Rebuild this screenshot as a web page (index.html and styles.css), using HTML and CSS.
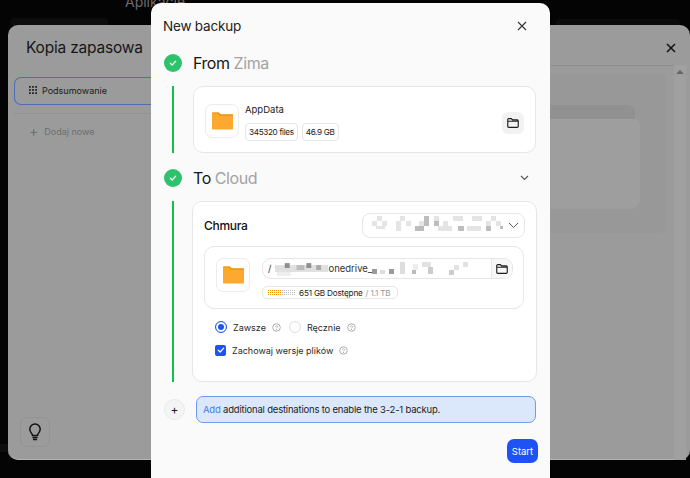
FILE: index.html
```html
<!DOCTYPE html>
<html lang="en">
<head>
    <meta charset="UTF-8">
    <meta name="viewport" content="width=device-width, initial-scale=1.0">
    <title>New backup</title>
    <link rel="stylesheet" href="styles.css">
</head>
<body>

    <svg class="sprites" width="0" height="0">
        <symbol id="folder-line" viewBox="0 0 16 16">
            <path d="M2 4.2c0-.7.5-1.2 1.2-1.2h2.9l1.4 1.500h5.300c.7 0 1.200.5 1.200 1.200v6.100c0 .7-.5 1.200-1.200 1.200H3.200c-.7 0-1.200-.5-1.200-1.200z M2 6h12" fill="none" stroke="currentColor" stroke-width="1.300"/>
        </symbol>
        <symbol id="folder-fill" viewBox="0 0 22 18">
            <path d="M0 1.200C0 .5.500 0 1.200 0h5.600l2.200 2h11.800c.7 0 1.200.5 1.200 1.200v13.600c0 .7-.5 1.200-1.200 1.200H1.200C.5 18 0 17.500 0 16.800z" fill="#fda92f"/>
            <path d="M7 0l2.400 2.200H22v1.300H8.500L6.200 1.200H0V1.200C0 .5.500 0 1.200 0z" fill="#ec8f1c"/>
        </symbol>
        <symbol id="check" viewBox="0 0 10 10">
            <path d="M2.300 5.200l1.900 1.800 3.500-3.800" fill="none" stroke="#fff" stroke-width="1.200" stroke-linecap="round" stroke-linejoin="round"/>
        </symbol>
        <symbol id="help" viewBox="0 0 10 10">
            <circle cx="5" cy="5" r="4.200" fill="none" stroke="currentColor" stroke-width="1"/>
            <path d="M3.800 4.100c0-.6.5-1.100 1.200-1.100s1.200.5 1.200 1.100c0 1-1.200.8-1.200 1.800" fill="none" stroke="currentColor" stroke-width=".9"/>
            <circle cx="5" cy="7.100" r=".6" fill="currentColor"/>
        </symbol>
        <defs>
            <pattern id="dots-used" width="2" height="2" patternUnits="userSpaceOnUse"><rect width="1" height="1" fill="#ee9412"/></pattern>
            <pattern id="dots-free" width="2" height="2" patternUnits="userSpaceOnUse"><rect width="1" height="1" fill="#bdbdbd"/></pattern>
        </defs>
    </svg>

    <div class="apps-title">Aplikacje</div>
    <div class="tile tile-a"></div>
    <div class="tile tile-b"></div>
    <div class="tile tile-c"></div>

    <div class="back-dialog">
        <div class="back-side">
            <div class="back-title">Kopia zapasowa</div>
            <div class="back-item">
                <svg class="dots" width="8" height="8" viewBox="0 0 9 9" fill="#222">
                    <rect width="2" height="2"/><rect x="3.500" width="2" height="2"/><rect x="7" width="2" height="2"/>
                    <rect y="3.500" width="2" height="2"/><rect x="3.500" y="3.500" width="2" height="2"/><rect x="7" y="3.500" width="2" height="2"/>
                    <rect y="7" width="2" height="2"/><rect x="3.500" y="7" width="2" height="2"/><rect x="7" y="7" width="2" height="2"/>
                </svg>
                Podsumowanie
            </div>
            <div class="back-add"><span class="back-plus">+</span>Dodaj nowe</div>
            <div class="bulb">
                <svg width="16" height="20" viewBox="0 0 16 20" fill="none" stroke="#111" stroke-width="1.500">
                    <path d="M5.500 13.500c0-2-2.700-3-2.700-6.300a5.200 5.200 0 0 1 10.400 0c0 3.300-2.700 4.300-2.700 6.300z"/>
                    <path d="M5.500 15.500h5M6 17.500h4"/>
                </svg>
            </div>
        </div>
        <div class="back-close">
            <svg width="10" height="10" viewBox="0 0 10 10" stroke="#111" stroke-width="1.500"><path d="M1 1l8 8M9 1l-8 8"/></svg>
        </div>
        <div class="back-rule"></div>
        <div class="back-pane">
            <div class="back-folder-tab"></div>
            <div class="back-folder"></div>
        </div>
        <div class="back-scroll"></div>
    </div>

    <div class="modal">
        <div class="modal-head">
            <span>New backup</span>
            <svg width="10" height="10" viewBox="0 0 10 10" stroke="#333" stroke-width="1.100"><path d="M1 1l8 8M9 1l-8 8"/></svg>
        </div>

        <div class="step-head">
            <span class="step-ok"><svg width="10" height="10"><use href="#check"/></svg></span>
            <span class="step-name">From <em>Zima</em></span>
        </div>
        <div class="step-body step-from">
            <div class="card source">
                <div class="icon-box"><svg width="21" height="18"><use href="#folder-fill"/></svg></div>
                <div class="source-info">
                    <div class="source-name">AppData</div>
                    <div class="tags">
                        <span class="tag">345320 files</span>
                        <span class="tag">46.9 GB</span>
                    </div>
                </div>
                <div class="folder-btn"><svg width="14" height="14"><use href="#folder-line"/></svg></div>
            </div>
        </div>

        <div class="step-head step-to">
            <span class="step-ok"><svg width="10" height="10"><use href="#check"/></svg></span>
            <span class="step-name">To <em>Cloud</em></span>
            <svg class="step-arrow" width="9" height="6" viewBox="0 0 9 6" fill="none" stroke="#555" stroke-width="1.100"><path d="M1 1l3.500 3.500L8 1"/></svg>
        </div>
        <div class="step-body step-dest">
            <div class="card dest">
                <div class="dest-top">
                    <span class="dest-title">Chmura</span>
                    <div class="select">
                        <svg class="mosaic" width="136" height="20" viewBox="0 0 136 20">
                            <g fill="#e4e4e4">
                                <rect x="9" y="1" width="5" height="5"/><rect x="4" y="6" width="5" height="5"/><rect x="14" y="6" width="5" height="5"/>
                                <rect x="32" y="1" width="5" height="5"/><rect x="28" y="6" width="5" height="5"/><rect x="38" y="6" width="5" height="5"/>
                                <rect x="51" y="6" width="5" height="5"/><rect x="66" y="1" width="5" height="5"/><rect x="75" y="6" width="5" height="5"/>
                                <rect x="85" y="1" width="10" height="5"/><rect x="104" y="1" width="10" height="5"/><rect x="123" y="1" width="5" height="5"/>
                                <rect x="118" y="6" width="5" height="5"/><rect x="128" y="6" width="5" height="5"/><rect x="99" y="11" width="14" height="5"/>
                                <rect x="28" y="11" width="5" height="5"/><rect x="70" y="11" width="14" height="5"/><rect x="8" y="11" width="9" height="3"/>
                            </g>
                            <g fill="#bdbdbd">
                                <rect x="56" y="1" width="5" height="10"/><rect x="47" y="11" width="9" height="5"/><rect x="66" y="6" width="5" height="5"/>
                                <rect x="118" y="11" width="5" height="5"/><rect x="90" y="11" width="6" height="5"/><rect x="132" y="11" width="3" height="3"/>
                            </g>
                        </svg>
                        <svg width="11" height="7" viewBox="0 0 11 7" fill="none" stroke="#555" stroke-width="1"><path d="M1 1l4.500 4.500L10 1"/></svg>
                    </div>
                </div>
                <div class="card path-card">
                    <div class="icon-box"><svg width="21" height="18"><use href="#folder-fill"/></svg></div>
                    <div class="path-main">
                        <div class="path-input">
                            <div class="path-text">
                                <span>/</span>
                                <svg class="mosaic" width="57" height="14" viewBox="0 0 58 14">
                                    <rect x="4" y="3" width="54" height="7" fill="#e0e0e0"/>
                                    <rect x="14" y="1" width="5" height="5" fill="#8f8f8f"/><rect x="26" y="3" width="8" height="5" fill="#bbb"/>
                                    <rect x="36" y="1" width="5" height="5" fill="#8f8f8f"/><rect x="46" y="3" width="5" height="5" fill="#aaa"/>
                                    <rect x="6" y="10" width="14" height="4" fill="#eee"/>
                                </svg>
                                <span>onedrive_</span>
                                <svg class="mosaic" width="98" height="14" viewBox="0 0 98 14">
                                    <rect x="0" y="7" width="5" height="5" fill="#9a9a9a"/><rect x="8" y="8" width="5" height="4" fill="#ddd"/><rect x="17" y="7" width="5" height="5" fill="#9a9a9a"/>
                                    <rect x="28" y="0" width="5" height="12" fill="#ddd"/><rect x="41" y="2" width="5" height="6" fill="#eee"/><rect x="40" y="8" width="4" height="4" fill="#bbb"/>
                                    <rect x="50" y="0" width="9" height="5" fill="#e2e2e2"/><rect x="56" y="5" width="5" height="7" fill="#ccc"/>
                                    <rect x="77" y="8" width="5" height="5" fill="#ccc"/><rect x="82" y="3" width="5" height="5" fill="#e2e2e2"/><rect x="91" y="0" width="5" height="5" fill="#e2e2e2"/>
                                </svg>
                            </div>
                            <div class="path-btn"><svg width="14" height="14"><use href="#folder-line"/></svg></div>
                        </div>
                        <div class="tag space-tag">
                            <svg class="space-bar" width="28" height="5">
                                <rect width="14" height="5" fill="url(#dots-used)"/>
                                <rect x="14" width="14" height="5" fill="url(#dots-free)"/>
                            </svg>
                            <span>651 GB Dostępne</span>
                            <span class="space-total">/ 1.1 TB</span>
                        </div>
                    </div>
                </div>
                <div class="options">
                    <span class="radio radio-on"></span>
                    <span class="opt-label">Zawsze</span>
                    <svg class="help" width="9" height="9"><use href="#help"/></svg>
                    <span class="radio radio-off"></span>
                    <span class="opt-label">Ręcznie</span>
                    <svg class="help" width="9" height="9"><use href="#help"/></svg>
                </div>
                <div class="options options-check">
                    <span class="checkbox"><svg width="10" height="10"><use href="#check"/></svg></span>
                    <span class="opt-label">Zachowaj wersje plików</span>
                    <svg class="help" width="9" height="9"><use href="#help"/></svg>
                </div>
            </div>
        </div>

        <div class="add-row">
            <div class="add-btn">+</div>
            <div class="add-note"><span class="add-link">Add</span> additional destinations to enable the 3-2-1 backup.</div>
        </div>

        <div class="modal-foot">
            <button class="start">Start</button>
        </div>
    </div>

</body>
</html>
```

FILE: styles.css
```css
* {
    margin: 0;
    padding: 0;
    box-sizing: border-box;
}
html, body {
    width: 690px;
    height: 478px;
    overflow: hidden;
}
body {
    position: relative;
    font-family: Inter, "Liberation Sans", sans-serif;
    background-color: #040404;
    color: #1c1c1c;
}
.sprites {
    position: absolute;
}

/* page behind the dialogs */
.apps-title {
    position: absolute;
    left: 125px;
    top: -7px;
    font-size: 14px;
    color: #6b6b6b;
}
.tile {
    position: absolute;
    background: #0c0c0c;
    border-radius: 8px;
}
.tile-a {
    left: 10px;
    top: 18px;
    width: 98px;
    height: 8px;
}
.tile-b {
    left: 556px;
    top: 19px;
    width: 124px;
    height: 8px;
}
.tile-c {
    left: 0;
    top: 444px;
    width: 8px;
    height: 8px;
    border-radius: 0;
}
.back-dialog {
    position: absolute;
    left: 8px;
    top: 25px;
    width: 682px;
    height: 435px;
    background: #9b9b9b;
    border-radius: 10px;
    border-bottom: 1px solid #b5b5b5;
}
.back-side {
    width: 143px;
    height: 100%;
    display: flex;
    flex-direction: column;
    padding: 13px 0 12px 6px;
}
.back-title {
    font-size: 15.500px;
    letter-spacing: -.2px;
    color: #161616;
    margin-left: 12px;
    height: 39px;
}
.back-item {
    display: flex;
    align-items: center;
    gap: 5px;
    width: 137px;
    height: 28px;
    padding: 0 0 2px 14px;
    font-size: 9px;
    color: #1a1a1a;
    border: 1px solid #4a6fb5;
    border-right: none;
    border-radius: 7px 0 0 7px;
}
.back-add {
    display: flex;
    align-items: center;
    gap: 6px;
    margin-top: 8px;
    padding: 11px 0 0 15px;
    font-size: 9px;
    color: #6e6e6e;
    border-top: 1px solid #929292;
}
.back-plus {
    font-size: 14px;
    line-height: 12px;
}
.bulb {
    margin: auto 0 0 6px;
    width: 30px;
    height: 30px;
    display: flex;
    align-items: center;
    justify-content: center;
    border: 1px solid #939393;
    border-radius: 7px;
}
.back-close {
    position: absolute;
    left: 658px;
    top: 18px;
    line-height: 0;
}
.back-rule {
    position: absolute;
    left: 534px;
    top: 40px;
    width: 138px;
    height: 1px;
    background: #8f8f8f;
}
.back-pane {
    position: absolute;
    left: 534px;
    top: 49px;
    width: 124px;
    height: 159px;
    background: #989898;
    border-radius: 0 6px 6px 0;
}
.back-folder-tab {
    position: absolute;
    left: 0;
    top: 31px;
    width: 93px;
    height: 30px;
    background: #919191;
    border-radius: 0 8px 0 0;
}
.back-folder {
    position: absolute;
    left: 0;
    top: 45px;
    width: 98px;
    height: 90px;
    background: #9e9e9e;
    border-radius: 0 5px 9px 0;
}
.back-scroll {
    position: absolute;
    left: 666px;
    top: 40px;
    width: 12px;
    height: 395px;
    background: #a0a0a0;
}
.back-scroll::before {
    content: "";
    position: absolute;
    left: 2px;
    top: 5px;
    border: 4px solid transparent;
    border-top: none;
    border-bottom: 4px solid #666;
}

/* new backup dialog */
.modal {
    position: absolute;
    left: 151px;
    top: 3px;
    width: 399px;
    height: 490px;
    padding: 0 14px 0 12px;
    background: #fafafa;
    border-radius: 10px;
}
.modal-head {
    display: flex;
    align-items: center;
    justify-content: space-between;
    height: 46px;
    padding-right: 9px;
    font-size: 13.500px;
    letter-spacing: -.2px;
    color: #222;
}
.step-head {
    display: flex;
    align-items: center;
    height: 28px;
}
.step-to {
    margin-top: 11px;
}
.step-ok {
    width: 18px;
    height: 18px;
    margin-left: 1px;
    margin-right: 11px;
    display: flex;
    align-items: center;
    justify-content: center;
    background: #2dc26b;
    border-radius: 50%;
}
.step-name {
    font-size: 16px;
    letter-spacing: -.45px;
    color: #161616;
}
.step-name em {
    font-style: normal;
    color: #a3a3a3;
}
.step-arrow {
    margin-left: auto;
    margin-right: 7px;
}
.step-body {
    margin-left: 9px;
    padding-left: 19px;
    border-left: 2px solid #12c14b;
}
.step-from {
    margin-top: 9px;
}
.step-dest {
    margin-top: 9px;
}
.card {
    background: #fff;
    border: 1px solid #e6e6e6;
    border-radius: 10px;
}
.source {
    display: flex;
    align-items: flex-start;
    height: 67px;
    padding: 17px 11px 0 11px;
}
.icon-box {
    flex: none;
    width: 34px;
    height: 34px;
    display: flex;
    align-items: center;
    justify-content: center;
    background: #fff;
    border: 1px solid #ececec;
    border-radius: 7px;
}
.source-info {
    flex: 1;
    margin-left: 6px;
}
.source-name {
    font-size: 9.500px;
    line-height: 12px;
    margin-bottom: 7px;
}
.tags {
    display: flex;
    gap: 4px;
}
.tag {
    display: inline-flex;
    align-items: center;
    height: 18px;
    padding: 0 3px;
    font-size: 8.200px;
    letter-spacing: -.35px;
    color: #222;
    border: 1px solid #e6e6e6;
    border-radius: 4px;
}
.folder-btn {
    width: 22px;
    height: 22px;
    margin-top: 8px;
    display: flex;
    align-items: center;
    justify-content: center;
    background: #f2f2f2;
    border-radius: 6px;
}
.dest {
    width: 345px;
    height: 181px;
    padding: 11px 11px 0;
    margin-left: -1px;
}
.dest-top {
    display: flex;
    align-items: center;
    justify-content: space-between;
    height: 24px;
}
.dest-title {
    font-size: 12px;
    font-weight: 500;
    letter-spacing: -.3px;
    color: #111;
}
.select {
    display: flex;
    align-items: center;
    width: 163px;
    height: 25px;
    padding: 0 5px 0 5px;
    justify-content: space-between;
    border: 1px solid #e6e6e6;
    border-radius: 8px;
}
.mosaic {
    flex: none;
}
.path-card {
    display: flex;
    align-items: flex-start;
    height: 63px;
    margin-top: 9px;
    margin-right: 1px;
    padding: 11px 10px 0 11px;
    border-radius: 10px;
}
.path-main {
    flex: 1;
    margin-left: 12px;
}
.path-input {
    display: flex;
    height: 21px;
    border: 1px solid #e6e6e6;
    border-radius: 9px;
    overflow: hidden;
}
.path-text {
    flex: 1;
    display: flex;
    align-items: center;
    padding-left: 5px;
    font-size: 9.500px;
    color: #333;
}
.path-btn {
    width: 21px;
    display: flex;
    align-items: center;
    justify-content: center;
    background: #f7f7f7;
    border-left: 1px solid #e6e6e6;
}
.space-tag {
    height: 13px;
    margin-top: 4px;
    padding: 0 6px 0 5px;
    gap: 3px;
    font-size: 8.200px;
    letter-spacing: -.2px;
    border-radius: 5px;
}
.space-bar {
    flex: none;
}
.space-total {
    color: #9a9a9a;
}
.options {
    display: flex;
    align-items: center;
    margin-top: 11px;
    margin-left: 11px;
    height: 14px;
}
.options-check {
    margin-top: 9px;
}
.opt-label {
    margin-left: 6px;
    font-size: 9px;
    color: #2a2a2a;
}
.help {
    margin-left: 6px;
    color: #a5a5a5;
}
.radio {
    flex: none;
    width: 12px;
    height: 12px;
    border-radius: 50%;
    background: #fff;
}
.radio-on {
    border: 1px solid #1f52f5;
    box-shadow: inset 0 0 0 2px #fff, inset 0 0 0 6px #1f52f5;
}
.radio-off {
    margin-left: 8px;
    border: 1px solid #ddd;
}
.checkbox {
    flex: none;
    width: 11px;
    height: 11px;
    display: flex;
    align-items: center;
    justify-content: center;
    background: #1f52f5;
    border-radius: 2px;
}
.add-row {
    display: flex;
    align-items: center;
    margin-top: 14px;
}
.add-btn {
    flex: none;
    width: 21px;
    height: 21px;
    margin-left: 1px;
    margin-right: 11px;
    display: flex;
    align-items: center;
    justify-content: center;
    font-size: 12px;
    background: #f4f4f4;
    border: 1px solid #e9e9e9;
    border-radius: 50%;
}
.add-note {
    flex: 1;
    height: 27px;
    display: flex;
    align-items: center;
    padding-left: 6px;
    white-space: pre-wrap;
    font-size: 9.500px;
    letter-spacing: -.2px;
    color: #222;
    background: #dbe8fb;
    border: 1px solid #6d9bf1;
    border-radius: 7px;
}
.add-link {
    color: #3f7cf0;
}
.modal-foot {
    display: flex;
    justify-content: flex-end;
    margin-top: 16px;
}
.start {
    width: 31px;
    height: 24px;
    margin-right: -2px;
    font-family: inherit;
    font-size: 9.500px;
    color: #fff;
    border: none;
    background-color: #1f52f5;
    border-radius: 7px;
}
```
